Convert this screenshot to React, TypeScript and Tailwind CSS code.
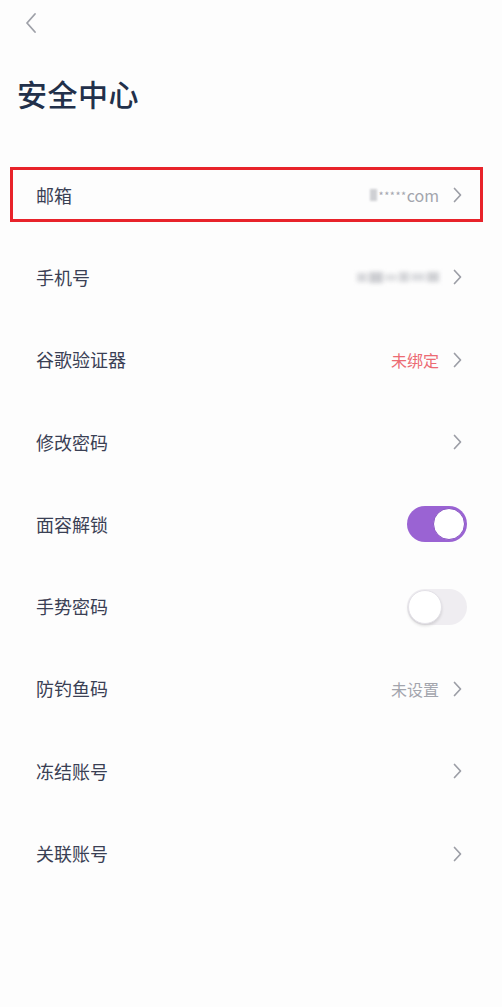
import React from "react";

const Chevron = () => (
  <svg width="11" height="18" viewBox="0 0 11 18" fill="none" className="shrink-0">
    <path d="M2.5 2.5 L8.5 9 L2.5 15.5" stroke="#9c9ea6" strokeWidth="1.7" strokeLinecap="round" strokeLinejoin="round" />
  </svg>
);

const Toggle = ({ on }: { on: boolean }) =>
  on ? (
    <div className="w-[60px] h-[36px] rounded-full bg-[#9a63d3] flex items-center justify-end pr-[2px]">
      <div className="w-[32px] h-[32px] rounded-full bg-white border border-[#8a55c4]" />
    </div>
  ) : (
    <div className="w-[60px] h-[36px] rounded-full bg-[#efedf1] flex items-center justify-start pl-[1px]">
      <div className="w-[34px] h-[34px] rounded-full bg-white border border-[#e4e2e8] shadow-[0_2px_3px_rgba(0,0,0,0.12)]" />
    </div>
  );

type Row = {
  label: string;
  right?: React.ReactNode;
  toggle?: boolean;
  chevron?: boolean;
  boxed?: boolean;
};

const rows: Row[] = [
  {
    label: "邮箱",
    boxed: true,
    chevron: true,
    right: (
      <div className="flex items-center text-[16px] text-[#a3a5ad]">
        <span className="w-[7px] h-[12px] bg-[#cfd0d4] blur-[1px] mr-[2px]" />
        <span className="text-[11px] tracking-[0.5px] leading-none">*****</span>
        <span>com</span>
      </div>
    ),
  },
  {
    label: "手机号",
    chevron: true,
    right: (
      <div className="flex items-center gap-[2px] blur-[2px]">
        <span className="w-[10px] h-[9px] bg-[#d8d9dc]" />
        <span className="w-[14px] h-[11px] bg-[#cdced2]" />
        <span className="w-[12px] h-[7px] bg-[#e0e1e3]" />
        <span className="w-[10px] h-[10px] bg-[#d6d7da]" />
        <span className="w-[14px] h-[8px] bg-[#dcdde0]" />
        <span className="w-[12px] h-[10px] bg-[#d0d1d5]" />
      </div>
    ),
  },
  {
    label: "谷歌验证器",
    chevron: true,
    right: <span className="text-[16px] text-[#ec6b73]">未绑定</span>,
  },
  { label: "修改密码", chevron: true },
  { label: "面容解锁", toggle: true },
  { label: "手势密码", toggle: false },
  {
    label: "防钓鱼码",
    chevron: true,
    right: <span className="text-[16px] text-[#a3a5ad]">未设置</span>,
  },
  { label: "冻结账号", chevron: true },
  { label: "关联账号", chevron: true },
];

export default function App() {
  return (
    <div
      className="w-[502px] min-h-[1007px] bg-[#fdfdfd]"
      style={{ fontFamily: '"Noto Sans CJK SC", "Noto Sans", sans-serif' }}
    >
      <div className="h-[46px] flex items-center pl-[24px]">
        <svg width="14" height="22" viewBox="0 0 14 22" fill="none">
          <path d="M11 2 L3 11 L11 20" stroke="#9ea0a8" strokeWidth="1.8" strokeLinecap="round" strokeLinejoin="round" />
        </svg>
      </div>
      <div className="h-[94px] flex items-center pl-[17px]">
        <h1 className="text-[30px] leading-none font-medium text-[#22304a] tracking-[0.5px]">安全中心</h1>
      </div>
      <div className="h-[14px]" />
      <div className="flex flex-col">
        {rows.map((r, i) => {
          const isToggle = r.toggle !== undefined;
          return (
            <div
              key={i}
              className={`relative h-[82.3px] flex items-center justify-between pl-[36px] ${isToggle ? "pr-[35px]" : "pr-[39px]"}`}
            >
              <span className="text-[18px] text-[#3a4054]">{r.label}</span>
              <div className="flex items-center gap-[13px]">
                {r.right}
                {isToggle ? <Toggle on={!!r.toggle} /> : r.chevron ? <Chevron /> : null}
              </div>
              {r.boxed && (
                <div className="absolute left-[10px] right-[19px] top-[13px] h-[55px] border-[3px] border-[#e8232a] pointer-events-none" />
              )}
            </div>
          );
        })}
      </div>
    </div>
  );
}
